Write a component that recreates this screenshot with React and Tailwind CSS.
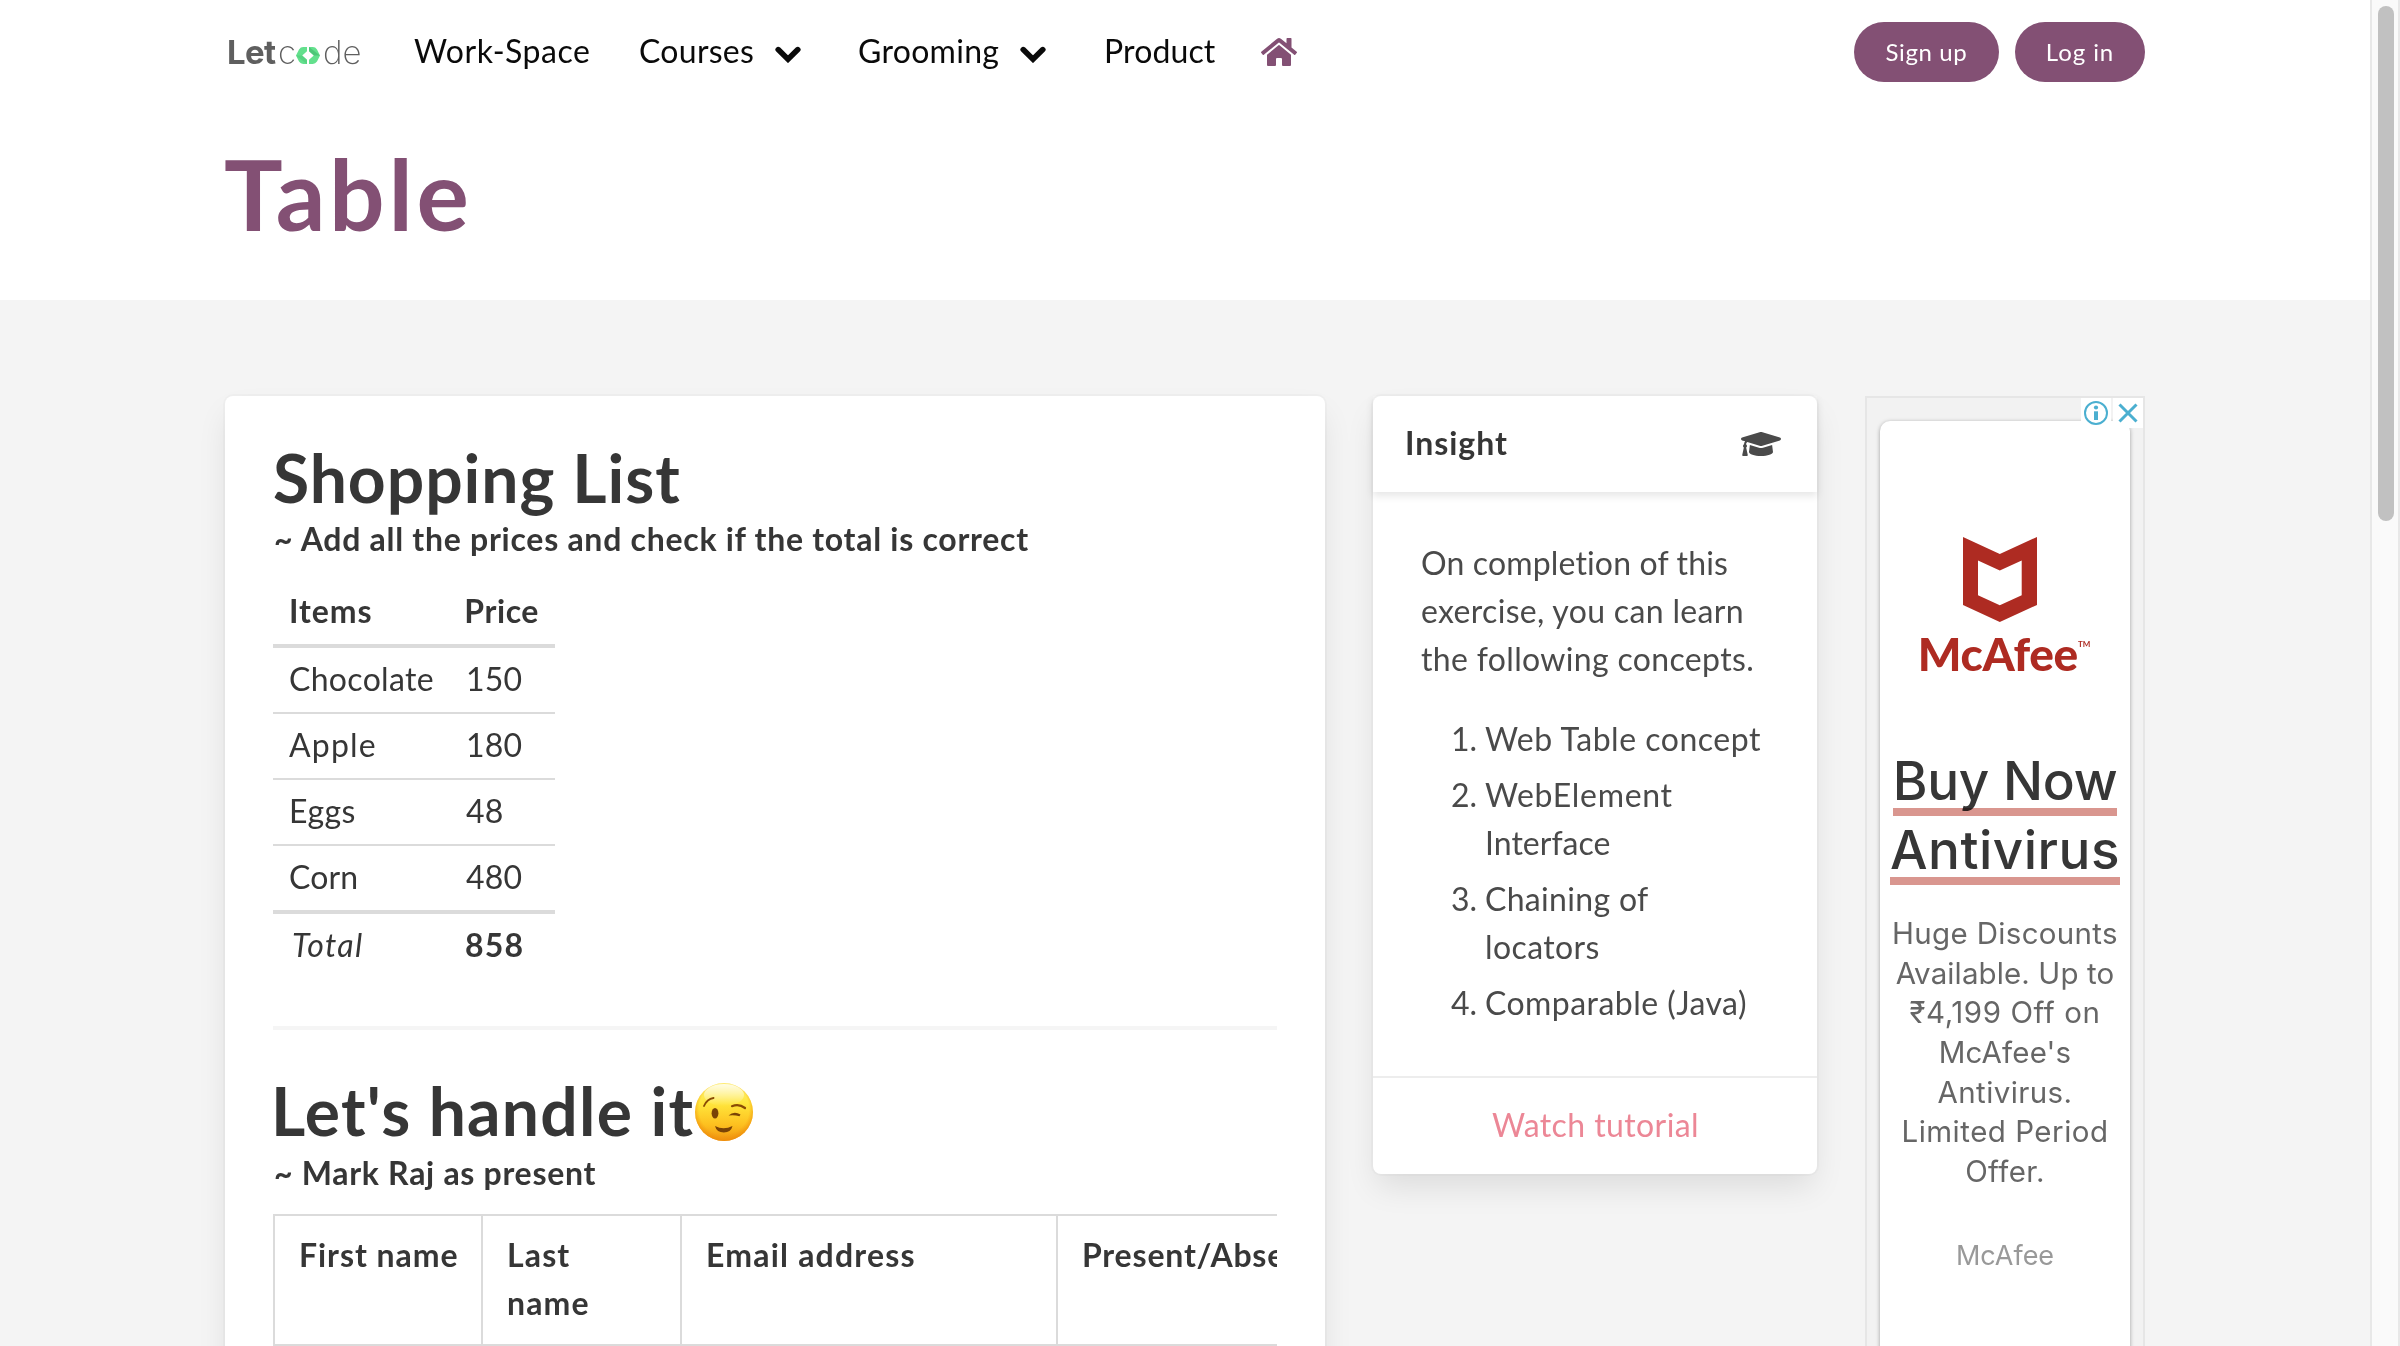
import React from "react";
import { FaHome, FaGraduationCap } from "react-icons/fa";

function Chevron() {
  return (
    <svg width="26" height="17" viewBox="0 0 26 17" fill="none">
      <path d="M3.2 3.6 13 13.2 22.8 3.6" stroke="#0a0a0a" strokeWidth="5.6" strokeLinecap="round" strokeLinejoin="miter" />
    </svg>
  );
}

function LogoMark() {
  return (
    <svg className="mt-[7px]" width="24" height="17" viewBox="0 0 24 17">
      <path d="M11 0v4.2L6.2 8.5 11 12.8V17H7.2Q4.6 17 3 14.6L0 8.5 3 2.4Q4.6 0 7.2 0Z" fill="#63e08d" />
      <path d="M0 8.5h6.2L11 12.8V17Z" fill="#4bc676" opacity=".5" />
      <path d="M13 0v4.2l4.8 4.3L13 12.8V17h3.8q2.6 0 4.2-2.4l3-6.1-3-6.1Q19.400 0 16.800 0Z" fill="#63e08d" />
      <path d="M24 8.500h-6.200L13 4.200V0Z" fill="#3fb56b" opacity=".6" />
    </svg>
  );
}

function Wink() {
  return (
    <svg width="60" height="60" viewBox="0 0 60 60" className="mt-[7px]">
      <defs>
        <linearGradient id="face" x1="0" y1="0" x2="0" y2="1">
          <stop offset="0" stopColor="#fff27a" />
          <stop offset=".35" stopColor="#ffe63c" />
          <stop offset=".72" stopColor="#fdc01f" />
          <stop offset="1" stopColor="#ef9412" />
        </linearGradient>
        <radialGradient id="rim" cx=".5" cy=".45" r=".54">
          <stop offset=".8" stopColor="#f39a10" stopOpacity="0" />
          <stop offset="1" stopColor="#ee8d0a" stopOpacity=".8" />
        </radialGradient>
        <linearGradient id="shine" x1="0" y1="0" x2="0" y2="1">
          <stop offset="0" stopColor="#fff" stopOpacity=".8" />
          <stop offset="1" stopColor="#fff" stopOpacity="0" />
        </linearGradient>
      </defs>
      <circle cx="30" cy="30" r="29" fill="url(#face)" />
      <circle cx="30" cy="30" r="29" fill="url(#rim)" />
      <ellipse cx="30" cy="13" rx="20" ry="11" fill="url(#shine)" />
      <path d="M10 24Q13 17 19.500 16" fill="none" stroke="#8a4b05" strokeWidth="1.900" strokeLinecap="round" />
      <path d="M38 24.200Q45 21.500 51 26" fill="none" stroke="#8a4b05" strokeWidth="2.200" strokeLinecap="round" />
      <ellipse cx="21" cy="31.300" rx="3.400" ry="5.200" fill="#7a4306" />
      <path d="M34.500 33.500Q40 28.500 46.500 32.500L45.500 34.300Q40 32.500 34.500 33.500Z" fill="#7a4306" />
      <path d="M21 44Q29.500 48.500 38.500 44Q37 50.500 29.800 50.500T21 44Z" fill="#7a4306" />
    </svg>
  );
}

const rows = [
  ["Chocolate", "tracking-[.32px]", "150"],
  ["Apple", "tracking-[1.17px]", "180"],
  ["Eggs", "tracking-[.4px]", "48"],
  ["Corn", "tracking-[.1px]", "480"],
];

function Navbar() {
  return (
    <nav className="flex h-[104px] items-center pl-[225px] pr-[225px] text-[32px] leading-[48px] text-[#0a0a0a]">
      <div className="flex w-[189px] items-center pl-[2px] font-['Inter'] text-[33px] leading-[48px] text-[#5f5f5f]">
        <span className="w-[51px] font-bold tracking-[-.6px]">Let</span>
        <span className="w-[18px] font-extralight tracking-[-1px]">c</span>
        <LogoMark />
        <span className="ml-[3px] font-extralight tracking-[0px]">de</span>
      </div>
      <a className="w-[225px] pb-[3px] tracking-[.51px]">Work-Space</a>
      <a className="w-[136px] pb-[3px] tracking-[.28px]">Courses</a>
      <div className="w-[83px] pt-[4px]"><Chevron /></div>
      <a className="w-[162px] pb-[3px] tracking-[.29px]">Grooming</a>
      <div className="w-[84px] pt-[4px]"><Chevron /></div>
      <a className="w-[157px] pb-[3px] tracking-[.12px]">Product</a>
      <FaHome className="h-[32px] w-[36px] text-[#835074]" />
      <div className="ml-auto flex gap-4 text-[24px] text-white">
        <button className="h-[60px] w-[145px] rounded-full bg-[#835074] pb-[1px] tracking-[.61px]">Sign up</button>
        <button className="h-[60px] w-[130px] rounded-full bg-[#835074] pb-[1px] tracking-[.92px]">Log in</button>
      </div>
    </nav>
  );
}

function ShoppingCard() {
  return (
    <section className="h-[1100px] w-[1100px] rounded-[8px] bg-white px-[48px] pt-[46px] text-[#363636] shadow-[0_16px_32px_-4px_rgba(10,10,10,.1),0_0_0_2px_rgba(10,10,10,.02)]">
      <h2 className="text-[66px] leading-[72px] font-bold tracking-[.95px]">Shopping List</h2>
      <p className="mt-[1px] pl-[1px] text-[32px] leading-[48px] font-bold tracking-[.72px]">~ Add all the prices and check if the total is correct</p>
      <div className="mt-[17px] w-[282px] text-[32px] leading-[48px]">
        <div className="flex border-b-4 border-[#dbdbdb] px-4 pt-[7px] pb-[9px] font-bold">
          <span className="w-[177px] tracking-[.95px]">Items</span>
          <span className="tracking-[.56px]">Price</span>
        </div>
        {rows.map(([name, track, price], i) => (
          <div key={name} className={`flex px-4 pt-[7px] pb-[9px] border-[#dbdbdb] ${i < 3 ? "border-b-2" : "border-b-4"}`}>
            <span className={`w-[177px] ${track}`}>{name}</span>
            <span className="tracking-[.19px]">{price}</span>
          </div>
        ))}
        <div className="flex px-4 pt-[7px] pb-[9px]">
          <span className="w-[176px] pl-[3px] italic tracking-[1.32px]">Total</span>
          <span className="font-bold tracking-[1.19px]">858</span>
        </div>
      </div>
      <div className="mt-[48px] h-[4px] bg-[#f5f5f5]" />
      <h2 className="mt-[45px] flex h-[72px] items-start text-[66px] leading-[72px] font-bold">
        <span className="-ml-[2px] tracking-[1.24px]">Let&apos;s handle it</span>
        <Wink />
      </h2>
      <p className="mt-[2px] pl-[1px] text-[32px] leading-[48px] font-bold tracking-[.7px]">~ Mark Raj as present</p>
      <div className="mt-[17px] flex h-[132px] overflow-hidden border-y-2 border-l-2 border-[#dbdbdb] text-[32px] leading-[48px] font-bold">
        <div className="w-[208px] shrink-0 border-r-2 border-[#dbdbdb] pt-[15px] pl-[24px] tracking-[.95px]">First name</div>
        <div className="w-[199px] shrink-0 border-r-2 border-[#dbdbdb] pt-[15px] pl-[24px] tracking-[1.14px]">Last<br />name</div>
        <div className="w-[376px] shrink-0 border-r-2 border-[#dbdbdb] pt-[15px] pl-[24px] tracking-[1.2px]">Email address</div>
        <div className="w-[300px] shrink-0 pt-[15px] pl-[24px] tracking-[.8px]">Present/Absent</div>
      </div>
    </section>
  );
}

const concepts = [
  ["1.", [["Web Table concept", "tracking-[.52px]"]]],
  ["2.", [["WebElement", "tracking-[.7px]"], ["Interface", "tracking-[.02px]"]]],
  ["3.", [["Chaining of", "tracking-[.32px]"], ["locators", "tracking-[.4px]"]]],
  ["4.", [["Comparable (Java)", "tracking-[.45px]"]]],
];

function InsightCard() {
  return (
    <aside className="h-[778px] w-[444px] rounded-[8px] bg-white text-[32px] leading-[48px] text-[#4a4a4a] shadow-[0_16px_32px_-4px_rgba(10,10,10,.1),0_0_0_2px_rgba(10,10,10,.02)]">
      <header className="flex h-[96px] items-center justify-between pr-[36px] pl-[32px] shadow-[0_4px_8px_rgba(10,10,10,.1)]">
        <span className="pb-[2px] font-bold tracking-[.97px] text-[#363636]">Insight</span>
        <FaGraduationCap className="h-[32px] w-[40px]" />
      </header>
      <div className="h-[584px] pt-[47px] pl-[48px]">
        <p className="whitespace-nowrap">
          <span className="tracking-[.15px]">On completion of this</span><br />
          <span className="tracking-[.32px]">exercise, you can learn</span><br />
          <span className="tracking-[.34px]">the following concepts.</span>
        </p>
        <div className="mt-[32px] flex flex-col gap-[8px]">
          {concepts.map(([n, lines]) => (
            <div key={n} className="flex">
              <span className="w-[64px] pr-[8px] text-right">{n}</span>
              <span className="flex flex-col whitespace-nowrap">
                {lines.map(([t, track]) => <span key={t} className={track}>{t}</span>)}
              </span>
            </div>
          ))}
        </div>
      </div>
      <footer className="h-[98px] border-t-2 border-[#ededed] pt-[23px] pl-[1px] text-center tracking-[.4px] text-[#ec8796]">Watch tutorial</footer>
    </aside>
  );
}

function AdCard() {
  return (
    <aside className="relative h-[1000px] w-[280px] border-2 border-[#e6e6e6] bg-[#f2f2f2] pt-[23px] pl-[13px] font-['Inter']">
      <div className="flex h-[1000px] w-[250px] flex-col items-center rounded-[10px] bg-white pt-[116px] text-center shadow-[0_1px_4px_rgba(0,0,0,.35)]">
        <svg className="mr-[11px] shrink-0" width="74" height="85" viewBox="0 0 74 85">
          <path fillRule="evenodd" fill="#ae2b22" d="M0 0 36.800 17 74 0V68L36.800 85 0 68ZM15 23.500V58.300L36.800 68.300 58.700 58.300V23.500L36.800 33.500Z" />
        </svg>
        <div className="mt-[4px] mr-[2px] flex h-[56px] items-start font-['Lato'] text-[46px] leading-[56px] font-black text-[#ae2b22]">
          <span className="tracking-[-.27px]">McAfee</span>
          <span className="mt-[14px] text-[8px] leading-[8px] font-bold">TM</span>
        </div>
        <div className="mt-[65px] flex flex-col items-center text-[53px] leading-[69px] font-medium text-[#363636]">
          <span className="relative tracking-[-.25px]">Buy Now<i className="absolute inset-x-0 bottom-0 h-[8px] bg-[#d9968f] mix-blend-multiply" /></span>
          <span className="relative tracking-[.49px]">Antivirus<i className="absolute inset-x-0 bottom-0 h-[8px] bg-[#d9968f] mix-blend-multiply" /></span>
        </div>
        <div className="mt-[29px] flex flex-col text-[29.5px] leading-[39.670px] whitespace-nowrap text-[#666]">
          <span className="tracking-[.33px]">Huge Discounts</span>
          <span className="tracking-[.12px]">Available. Up to</span>
          <span className="tracking-[.58px]">₹4,199 Off on</span>
          <span className="tracking-[.18px]">McAfee&apos;s</span>
          <span className="tracking-[.4px]">Antivirus.</span>
          <span className="tracking-[.5px]">Limited Period</span>
          <span className="tracking-[.4px]">Offer.</span>
        </div>
        <div className="mt-[44px] text-[27px] leading-[40px] text-[#999]">McAfee</div>
      </div>
      <div className="absolute top-0 right-0 flex gap-[2px]">
        <svg className="bg-white" width="30" height="30" viewBox="0 0 30 30" fill="none" stroke="#4bafd0">
          <circle cx="15" cy="15" r="11" strokeWidth="2" />
          <path d="M15 13.300V22" strokeWidth="4" />
          <circle cx="15" cy="9.500" r="2.100" fill="#4bafd0" stroke="none" />
        </svg>
        <svg className="bg-white" width="30" height="30" viewBox="0 0 30 30" fill="none" stroke="#4bafd0" strokeWidth="3">
          <path d="M6.500 6.500 23.500 23.500M23.500 6.500 6.500 23.500" />
        </svg>
      </div>
    </aside>
  );
}

export default function App() {
  return (
    <div className="flex h-[1346px] w-[2400px] overflow-hidden bg-white font-['Lato',sans-serif]">
      <div className="w-[2370px]">
        <Navbar />
        <div className="h-[196px] pt-[35px] pl-[224px]">
          <h1 className="text-[98px] leading-[108px] font-bold tracking-[3.7px] text-[#835074]">Table</h1>
        </div>
        <main className="flex h-[1046px] items-start gap-[48px] overflow-hidden bg-[#f4f4f4] pt-[96px] pl-[225px]">
          <ShoppingCard />
          <InsightCard />
          <AdCard />
        </main>
      </div>
      <div className="w-[30px] border-x-2 border-[#e8e8e8] bg-[#fafafa] pt-[6px] pl-[6px]">
        <div className="h-[515px] w-[16px] rounded-full bg-[#c1c1c1]" />
      </div>
    </div>
  );
}
